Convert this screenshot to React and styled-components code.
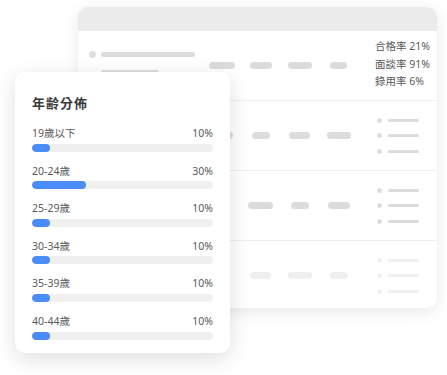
import React from "react";
import styled, { createGlobalStyle } from "styled-components";

const GlobalStyle = createGlobalStyle`
  html, body {
    margin: 0;
    padding: 0;
    background: #fff;
    font-family: "Noto Sans", "Noto Sans CJK TC", sans-serif;
  }
`;

const Stage = styled.div`
  position: relative;
  width: 447px;
  height: 375px;
  padding: 7px 0 0 78px;
  box-sizing: border-box;
`;

const BackCard = styled.div`
  width: 359px;
  height: 301px;
  background: #fff;
  border-radius: 10px;
  box-shadow: 0 4px 16px rgba(0, 0, 0, 0.09);
  overflow: hidden;
`;

const CardHead = styled.div`
  height: 24px;
  background: #ebebeb;
`;

const Row = styled.div`
  display: grid;
  grid-template-columns: 124px repeat(4, 39px) 1fr;
  align-items: center;
  height: 69px;
  border-top: ${(p) => (p.first ? "none" : "1px solid #eeeeee")};
`;

const NameCell = styled.div`
  align-self: start;
  display: flex;
  flex-direction: column;
  gap: 12px;
  padding: 20px 0 0 11px;
`;

const NameLine = styled.div`
  display: flex;
  align-items: center;
  gap: 5px;
`;

const Dot = styled.span`
  width: ${(p) => p.size || 6}px;
  height: ${(p) => p.size || 6}px;
  border-radius: 50%;
  background: ${(p) => (p.faded ? "#f0f0f0" : "#dedede")};
  flex: none;
`;

const Bar = styled.span`
  display: block;
  width: ${(p) => p.w}px;
  height: ${(p) => p.h || 5}px;
  margin-left: ${(p) => p.indent || 0}px;
  border-radius: 3px;
  background: ${(p) => (p.faded ? "#f0f0f0" : "#dcdcdc")};
`;

const PillCell = styled.div`
  display: flex;
  justify-content: center;
`;

const Pill = styled.span`
  width: ${(p) => p.w}px;
  height: 7px;
  border-radius: 4px;
  background: ${(p) => (p.faded ? "#efefef" : "#dcdcdc")};
`;

const Stats = styled.div`
  padding-left: 17px;
  font-size: 10.5px;
  line-height: 17.5px;
  color: #5a5a5a;
  margin-top: -2px;
`;

const List = styled.div`
  padding-left: 19px;
  display: flex;
  flex-direction: column;
  gap: 10.5px;
`;

const ListItem = styled.div`
  display: flex;
  align-items: center;
  gap: 6px;
`;

const AgeCard = styled.div`
  position: absolute;
  left: 15px;
  top: 72px;
  width: 215px;
  height: 281px;
  box-sizing: border-box;
  padding: 23px 17px 14px;
  background: #fff;
  border-radius: 10px;
  box-shadow: 0 6px 22px rgba(0, 0, 0, 0.13);
`;

const Title = styled.div`
  font-size: 13px;
  line-height: 16px;
  font-weight: 700;
  color: #3a3a3a;
  letter-spacing: 1px;
  margin-bottom: 15px;
`;

const AgeRow = styled.div`
  margin-bottom: 12px;
`;

const AgeLabel = styled.div`
  display: flex;
  justify-content: space-between;
  font-size: 10.5px;
  line-height: 14px;
  color: #5a5a5a;
  margin-bottom: 3.6px;
`;

const Track = styled.div`
  height: 8px;
  border-radius: 4px;
  background: #f0f0f0;
  overflow: hidden;
`;

const Fill = styled.div`
  height: 100%;
  border-radius: 4px;
  background: #4b8df8;
`;

const ages = [
  { label: "19歲以下", pct: 10 },
  { label: "20-24歲", pct: 30 },
  { label: "25-29歲", pct: 10 },
  { label: "30-34歲", pct: 10 },
  { label: "35-39歲", pct: 10 },
  { label: "40-44歲", pct: 10 },
];

const rows = [
  { pills: [22, 18, 21, 24] },
  { pills: [0, 25, 18, 22] },
  { pills: [0, 21, 24, 18], faded: true },
];

const MiniList = ({ faded }) => (
  <List>
    {[0, 1, 2].map((i) => (
      <ListItem key={i}>
        <Dot size={5} faded={faded} />
        <Bar w={31} h={3} faded={faded} />
      </ListItem>
    ))}
  </List>
);

export default function App() {
  return (
    <>
      <GlobalStyle />
      <Stage>
        <BackCard>
          <CardHead />
          <Row first>
            <NameCell>
              <NameLine>
                <Dot size={7} />
                <Bar w={94} />
              </NameLine>
              <Bar w={58} indent={12} />
            </NameCell>
            <PillCell><Pill w={26} /></PillCell>
            <PillCell><Pill w={22} /></PillCell>
            <PillCell><Pill w={24} /></PillCell>
            <PillCell><Pill w={17} /></PillCell>
            <Stats>
              <div>合格率 21%</div>
              <div>面談率 91%</div>
              <div>錄用率 6%</div>
            </Stats>
          </Row>
          {rows.map((r, i) => (
            <Row key={i}>
              <div />
              {r.pills.map((w, j) => (
                <PillCell key={j}>{w > 0 && <Pill w={w} faded={r.faded} />}</PillCell>
              ))}
              <MiniList faded={r.faded} />
            </Row>
          ))}
        </BackCard>

        <AgeCard>
          <Title>年齢分佈</Title>
          {ages.map((a) => (
            <AgeRow key={a.label}>
              <AgeLabel>
                <span>{a.label}</span>
                <span>{a.pct}%</span>
              </AgeLabel>
              <Track>
                <Fill style={{ width: `${a.pct}%` }} />
              </Track>
            </AgeRow>
          ))}
        </AgeCard>
      </Stage>
    </>
  );
}
